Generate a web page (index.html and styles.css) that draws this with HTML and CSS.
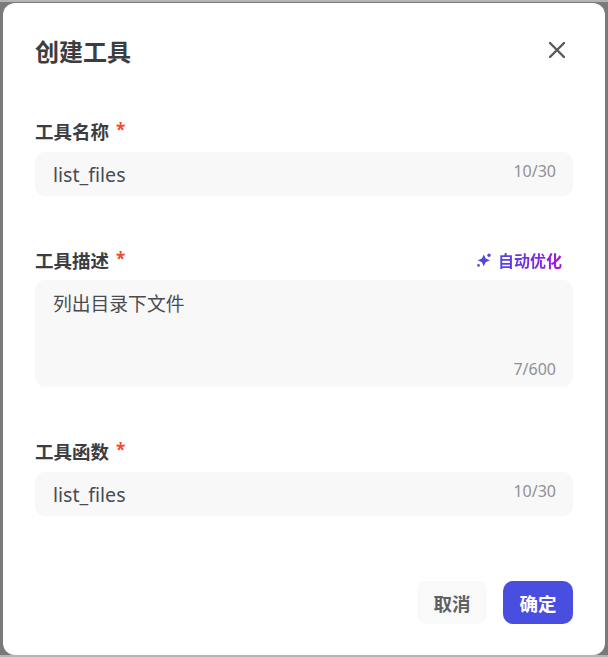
FILE: index.html
```html
<!DOCTYPE html>
<html lang="zh-CN">
<head>
<meta charset="utf-8">
<title>创建工具</title>
<link rel="stylesheet" href="styles.css">
</head>
<body>
<div class="dialog">
  <header class="head">
    <h1 class="title">创建工具</h1>
    <svg class="close" viewBox="0 0 16 16" width="16" height="16"><path d="M1 1 15 15M15 1 1 15" fill="none" stroke="#58595d" stroke-width="2.4" stroke-linecap="round"/></svg>
  </header>
  <section class="field field-name">
    <div class="label-row"><span class="label">工具名称</span><span class="req">*</span></div>
    <div class="input"><span class="value">list_files</span><span class="count">10/30</span></div>
  </section>
  <section class="field field-desc">
    <div class="label-row">
      <span class="label">工具描述</span><span class="req">*</span>
      <span class="optimize">
        <svg class="spark" viewBox="0 0 14 14" width="14" height="14"><path fill="#5046e5" d="M6.8 1.4 8.7 5.4 12.8 7.3 8.7 9.2 6.8 13.2 4.9 9.2.8 7.3 4.9 5.4z"/><circle cx="12" cy="2.2" r="1.7" fill="#5046e5"/><circle cx="1.5" cy="12.4" r="1.3" fill="#5046e5"/></svg>
        <span class="optimize-text">自动优化</span>
      </span>
    </div>
    <div class="textarea"><span class="value">列出目录下文件</span><span class="count">7/600</span></div>
  </section>
  <section class="field field-func">
    <div class="label-row"><span class="label">工具函数</span><span class="req">*</span></div>
    <div class="input"><span class="value">list_files</span><span class="count">10/30</span></div>
  </section>
  <footer class="foot">
    <button class="btn btn-cancel">取消</button>
    <button class="btn btn-ok">确定</button>
  </footer>
</div>
</body>
</html>
```
FILE: styles.css
```css
* { box-sizing: border-box; }
html, body { margin: 0; height: 100%; }
body {
  width: 608px;
  height: 657px;
  background: #7a7a7a;
  border-top: 2px solid #b4b4b4;
  border-bottom: 2px solid #b4b4b4;
  padding: 1px 3px 0;
  overflow: hidden;
  font-family: "Noto Sans", "Noto Sans CJK SC", sans-serif;
  color: #37383c;
}
.dialog {
  height: 652px;
  background: #fff;
  border-radius: 12px;
  padding: 0 32px;
  display: flex;
  flex-direction: column;
}
.head {
  height: 113px;
  padding-top: 32px;
  display: flex;
  justify-content: space-between;
  align-items: flex-start;
}
.title {
  margin: 0;
  font-size: 24px;
  line-height: 32px;
  font-weight: 700;
  font-family: "Noto Sans CJK SC", sans-serif;
  color: #3c3d41;
}
.close { margin: 7px 8px 0 0; }
.field { display: flex; flex-direction: column; }
.label-row {
  height: 32px;
  padding-bottom: 2px;
  margin-bottom: 4px;
  display: flex;
  align-items: center;
}
.label {
  font-size: 18.5px;
  font-weight: 700;
  font-family: "Noto Sans CJK SC", sans-serif;
  color: #3c3d41;
}
.req { margin: -4px 0 0 7px; color: #ee4d2d; font-size: 17px; font-weight: 700; }
.optimize { margin-left: auto; margin-right: 11px; display: flex; align-items: center; gap: 7px; }
.optimize-text {
  font-size: 16px;
  font-weight: 700;
  font-family: "Noto Sans CJK SC", sans-serif;
  background: linear-gradient(90deg, #4f46e5, #a016e0);
  -webkit-background-clip: text;
  background-clip: text;
  color: transparent;
}
.input, .textarea {
  background: #f8f8f9;
  border-radius: 10px;
  padding: 0 17px 0 18px;
  display: flex;
  justify-content: space-between;
  font-size: 19.6px;
  color: #4a4b50;
}
.input { height: 44px; align-items: center; }
.textarea { height: 107px; position: relative; padding-top: 10px; }
.value { line-height: 26px; }
.input .value { margin-top: 2px; }
.textarea .value { font-family: "Noto Sans CJK SC", sans-serif; font-size: 18.8px; }
.count { font-size: 16px; color: #909195; line-height: 24px; }
.input .count { margin-top: -6px; }
.textarea .count { position: absolute; right: 17px; bottom: 6px; }
.field-desc { margin-top: 49px; }
.field-desc .label-row { margin-bottom: 3px; }
.field-func { margin-top: 49px; }
.foot {
  margin-top: auto;
  padding-bottom: 31px;
  display: flex;
  justify-content: flex-end;
  gap: 16px;
}
.btn {
  height: 43px;
  width: 70px;
  border: 0;
  border-radius: 10px;
  font-size: 18.5px;
  font-weight: 700;
  font-family: "Noto Sans CJK SC", sans-serif;
  padding: 0;
}
.btn-cancel { background: #f9f9fa; color: #5f6064; }
.btn-ok { background: #4a4ee0; color: #fff; }
```
